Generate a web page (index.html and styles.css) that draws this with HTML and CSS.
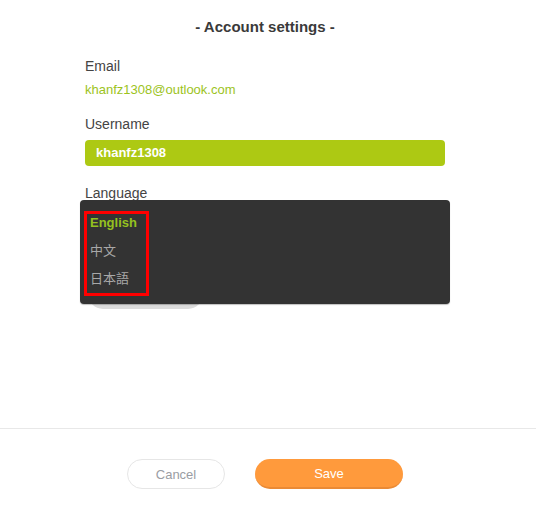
FILE: index.html
```html
<!DOCTYPE html>
<html lang="en">
<head>
<meta charset="utf-8">
<title>Account settings</title>
<link rel="stylesheet" href="styles.css">
</head>
<body>
<div class="page">
  <h1 class="title">- Account settings -</h1>
  <div class="form">
    <div class="field">
      <div class="label">Email</div>
      <div class="email">khanfz1308@outlook.com</div>
    </div>
    <div class="field field-user">
      <div class="label">Username</div>
      <div class="input">khanfz1308</div>
    </div>
    <div class="field field-lang">
      <div class="label">Language</div>
      <div class="lang-select">English</div>
      <div class="menu">
        <ul class="menu-list">
          <li class="item active">English</li>
          <li class="item">中文</li>
          <li class="item">日本語</li>
        </ul>
      </div>
    </div>
  </div>
  <div class="footer">
    <button class="btn btn-cancel">Cancel</button>
    <button class="btn btn-save">Save</button>
  </div>
</div>
</body>
</html>
```
FILE: styles.css
```css
* { box-sizing: border-box; }
html, body { margin: 0; padding: 0; background: #fff; }
body {
  font-family: "Liberation Sans", Arial, sans-serif;
  color: #444;
}
.page {
  height: 505px;
  display: flex;
  flex-direction: column;
}
.title {
  margin: 0;
  padding-top: 17px;
  width: 530px;
  text-align: center;
  font-size: 15px;
  line-height: 20px;
  font-weight: bold;
  color: #3a3a3a;
}
.form {
  padding-left: 85px;
  width: 445px;
  padding-top: 20px;
}
.label {
  font-size: 14px;
  line-height: 18px;
  color: #444;
}
.email {
  margin-top: 6px;
  font-size: 13px;
  line-height: 18px;
  color: #9cc31c;
}
.field-user { margin-top: 16px; }
.input {
  margin-top: 7px;
  height: 26px;
  line-height: 26px;
  background: #adc913;
  border-radius: 4px;
  padding-left: 11px;
  color: #fff;
  font-weight: bold;
  font-size: 13px;
}
.field-lang {
  margin-top: 18px;
  position: relative;
}
.lang-select {
  margin-top: 77px;
  margin-left: 3px;
  width: 115px;
  height: 30px;
  border-radius: 15px;
  background: #dcdcdc;
  color: #dcdcdc;
  font-size: 13px;
  line-height: 30px;
  padding-left: 15px;
}
.menu {
  position: absolute;
  top: 16px;
  left: -5px;
  width: 370px;
  height: 104px;
  background: #333;
  border-radius: 4px;
  box-shadow: 0 1px 1px rgba(0, 0, 0, 0.25);
  padding: 11px 0 0 4px;
}
.menu-list {
  list-style: none;
  margin: 0;
  padding: 1px 0 6px 3px;
  width: 65px;
  border: 3px solid #f00;
}
.item {
  font-size: 13px;
  line-height: 16px;
  margin-bottom: 12px;
  color: #a8a8a8;
  font-family: "Liberation Sans", "Noto Sans CJK SC", sans-serif;
}
.item:last-child { margin-bottom: 0; }
.item.active {
  color: #95c11f;
  font-weight: bold;
}
.footer {
  margin-top: auto;
  height: 77px;
  border-top: 1px solid #e8e8e8;
  padding: 30px 0 0 127px;
  display: flex;
  gap: 30px;
  align-items: flex-start;
}
.btn {
  height: 30px;
  border-radius: 15px;
  font-family: "Liberation Sans", Arial, sans-serif;
  font-size: 13px;
  padding: 0;
  cursor: pointer;
}
.btn-cancel {
  width: 98px;
  background: #fff;
  border: 1px solid #e6e6e6;
  color: #9a9da3;
}
.btn-save {
  width: 148px;
  background: #ff9a3c;
  border: none;
  border-bottom: 2px solid #ea8a35;
  color: #fff;
}
```
